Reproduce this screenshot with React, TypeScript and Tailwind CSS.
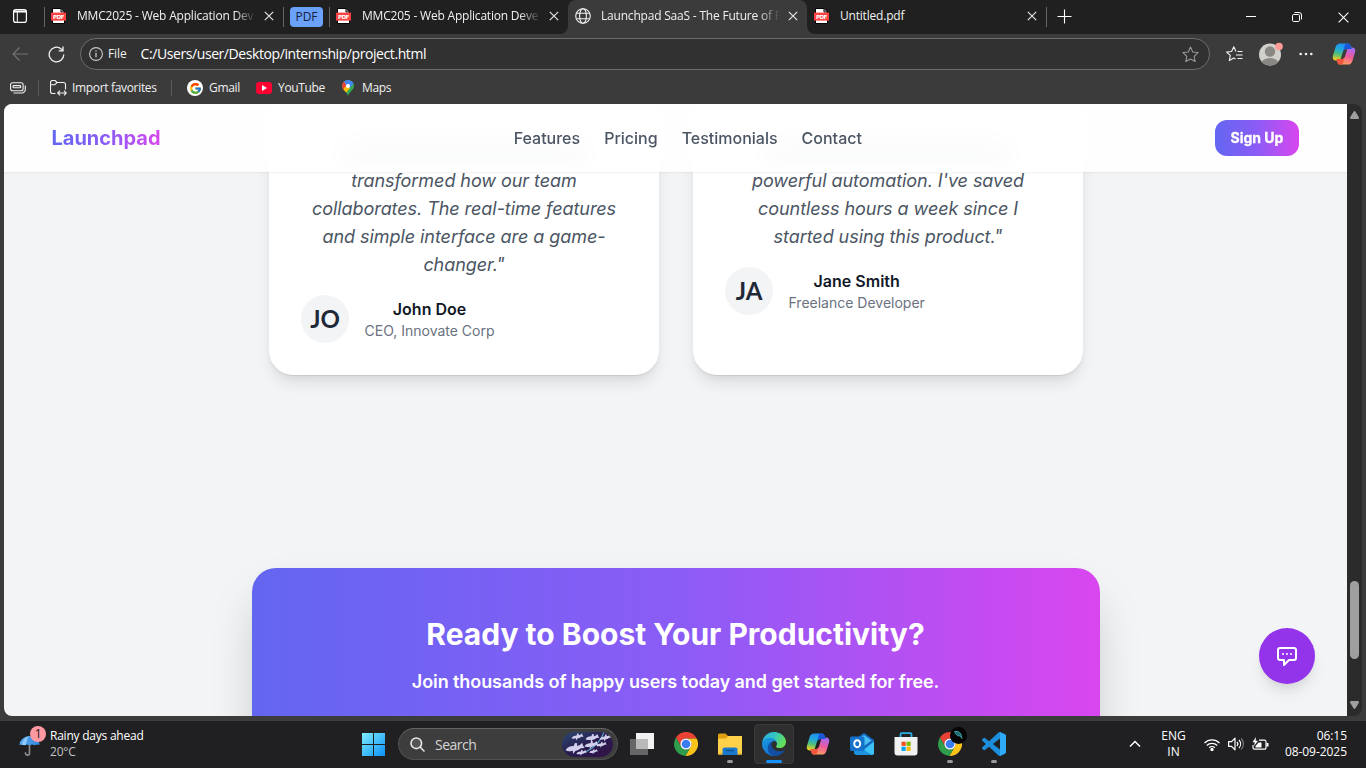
import React from 'react';
import { FcGoogle } from 'react-icons/fc';

function Cross() {
  return (
    <svg width="10" height="10" viewBox="0 0 10 10" className="shrink-0" stroke="#e4e4e4" strokeWidth="1.2">
      <path d="M.8.8l8.4 8.4M9.2.8L.8 9.2" />
    </svg>
  );
}

function PdfIcon() {
  return (
    <svg width="15" height="16" viewBox="0 0 15 16" className="mr-px shrink-0">
      <path d="M1.5.5h8.5l3.5 3.5v11.5h-12z" fill="#fff" stroke="#000" />
      <path d="M10 .5V4h3.5z" fill="#ddd" stroke="#000" />
      <rect y="4.6" width="15" height="8" fill="#fb4141" />
      <text x="7.5" y="10.8" textAnchor="middle" fontSize="5.6" fontWeight="700" fill="#fff" fontFamily="DejaVu Sans, sans-serif" textLength="11">PDF</text>
    </svg>
  );
}

function Globe() {
  return (
    <svg width="16" height="16" viewBox="0 0 16 16" className="shrink-0" fill="none" stroke="#f0f0f0" strokeWidth="1.1">
      <circle cx="8" cy="8" r="7.3" />
      <ellipse cx="8" cy="8" rx="3.4" ry="7.3" />
      <path d="M1.3 5.3h13.4M1.3 10.7h13.4" />
    </svg>
  );
}

function Copilot({ size, id }: { size: number; id: string }) {
  const d = 'M8 1.5h7.6c1.8 0 2.6 1 3.1 2.6L19.6 7H15c-2 0-3.4.8-4 2.6L9 16c-.5 1.6-1.4 2.4-3 2.4H4c-2.6 0-3.8-1.9-3.1-4.5l2.7-8.8C4.3 2.7 5.9 1.5 8 1.5z';
  return (
    <svg width={size} height={size} viewBox="0 0 24 24" className="shrink-0">
      <defs>
        <linearGradient id={id + 'a'} x1=".55" y1="0" x2=".3" y2="1">
          <stop offset="0" stopColor="#1e8ff0" />
          <stop offset=".35" stopColor="#22a8e0" />
          <stop offset=".65" stopColor="#4cbf7c" />
          <stop offset="1" stopColor="#f3cf1d" />
        </linearGradient>
        <linearGradient id={id + 'b'} x1=".3" y1="1" x2=".6" y2="0">
          <stop offset="0" stopColor="#a66bf5" />
          <stop offset=".5" stopColor="#ee5a9c" />
          <stop offset="1" stopColor="#ffa05c" />
        </linearGradient>
      </defs>
      <path d={d} fill={`url(#${id}b)`} transform="rotate(180 12 12)" />
      <path d={d} fill={`url(#${id}a)`} />
      <path d="M13.4 1.5h2.2c1.8 0 2.6 1 3.1 2.6L19.6 7H15c-2 0-3.4.8-4 2.6z" fill="#1a56d6" />
      <path d="M10.6 22.5H8.4c-1.8 0-2.6-1-3.1-2.6L4.4 17H9c2 0 3.4-.8 4-2.6z" fill="#f2563f" />
    </svg>
  );
}

function Chrome() {
  return (
    <svg width="24" height="24" viewBox="2 2 44 44" className="shrink-0">
      <path d="M43.6 14H24a10 10 0 0 0-8.66 15L5.54 12.03A22 22 0 0 1 43.6 14z" fill="#ea4335" />
      <path d="M22.86 45.97L32.66 29A10 10 0 0 0 24 14h19.6A22 22 0 0 1 22.86 45.97z" fill="#fcc419" />
      <path d="M5.54 12.03L15.34 29A10 10 0 0 0 32.66 29L22.86 45.97A22 22 0 0 1 5.54 12.03z" fill="#2f9e4c" />
      <circle cx="24" cy="24" r="10.3" fill="#fff" />
      <circle cx="24" cy="24" r="8" fill="#3b7df0" />
    </svg>
  );
}

function Edge() {
  return (
    <svg width="24" height="24" viewBox="0 0 256 256" className="shrink-0">
      <defs>
        <linearGradient id="ed1" x1="0" y1="0" x2="1" y2=".4">
          <stop offset="0" stopColor="#2ba9e6" />
          <stop offset=".5" stopColor="#33c4c4" />
          <stop offset="1" stopColor="#63e05a" />
        </linearGradient>
        <linearGradient id="ed2" x1="0" y1="0" x2=".4" y2="1">
          <stop offset="0" stopColor="#1b9de2" />
          <stop offset="1" stopColor="#1573cf" />
        </linearGradient>
      </defs>
      <path d="M105.73 241.46a79.2 79.2 0 0 1-22.74-21.34 80.72 80.72 0 0 1 29.53-120c3.12-1.47 8.45-4.13 15.54-4a32.35 32.35 0 0 1 25.69 13 31.88 31.88 0 0 1 6.36 18.66c0-.21 24.46-79.6-80-79.6-43.9 0-80 41.66-80 78.21a130.15 130.15 0 0 0 12.11 56 128 128 0 0 0 156.38 67.11 75.55 75.55 0 0 1-62.78-8z" fill="url(#ed2)" />
      <path d="M235.68 195.46a93.73 93.73 0 0 1-10.54 4.71 101.87 101.87 0 0 1-35.9 6.46c-47.32 0-88.54-32.55-88.54-74.32A31.48 31.48 0 0 1 117.13 105c-42.8 1.8-53.8 46.4-53.8 72.53 0 73.88 68.09 78 82.76 78 7.91 0 19.84-2.3 27-4.56l1.31-.44a128.34 128.34 0 0 0 66.6-49.4 4 4 0 0 0-5.32-5.64z" fill="#124fa3" />
      <path d="M152.33 148.86c-.81 1.05-3.3 2.5-3.3 5.66 0 2.61 1.7 5.12 4.72 7.23 14.38 10 41.49 8.68 41.56 8.68a59.56 59.56 0 0 0 30.27-8.35 61.38 61.38 0 0 0 30.43-52.88c.26-22.41-8-37.31-11.34-43.91C223.46 23.84 177.72 0 128 0A128 128 0 0 0 0 126.2c.48-36.54 36.8-66.05 80-66.05 3.5 0 23.46.34 42 10.07 16.34 8.58 24.9 18.94 30.85 29.21 6.18 10.67 7.28 24.15 7.28 29.52s-2.74 13.33-7.8 19.91z" fill="url(#ed1)" />
    </svg>
  );
}

function Explorer() {
  return (
    <svg width="24" height="22" viewBox="0 0 24 22">
      <path d="M0 2A1.5 1.5 0 0 1 1.5.5h6L10 3v4H0z" fill="#e0a012" />
      <path d="M0 5.5h8L10 3h14v18.5H0z" fill="#ffd04a" />
      <path d="M0 20h24v1.5H0z" fill="#f2b92c" />
      <path d="M4.5 22v-5.500a2 2 0 0 1 2-2h11a2 2 0 0 1 2 2V22z" fill="#1b78cc" />
      <path d="M8 17.5h8" stroke="#0b4f8f" strokeWidth="1.3" />
    </svg>
  );
}

function Outlook() {
  return (
    <svg width="24" height="24" viewBox="0 0 24 24">
      <path d="M4 8L14 .8l10 7.2V22H4z" fill="#1567c0" />
      <path d="M7 7.5L14 3l7.5 5.5L14 14z" fill="#49c0f2" />
      <path d="M24 9.5V21a2 2 0 0 1-2 2H7z" fill="#3cc3f4" />
      <path d="M4 12l18 11H7a3 3 0 0 1-3-3z" fill="#1c92e0" />
      <rect y="4.5" width="14.5" height="14.5" rx="1.5" fill="#1272cc" />
      <ellipse cx="7.2" cy="11.7" rx="3" ry="3.5" fill="none" stroke="#fff" strokeWidth="1.9" />
    </svg>
  );
}

function Store() {
  return (
    <svg width="24" height="24" viewBox="0 0 24 24">
      <path d="M6.5 6V2.400A1.200 1.200 0 0 1 7.700 1.200h8.600a1.200 1.200 0 0 1 1.200 1.200V6" fill="none" stroke="#29b0ea" strokeWidth="1.8" />
      <path d="M.5 5h23v15.500a3 3 0 0 1-3 3h-17a3 3 0 0 1-3-3z" fill="#f1f1f1" />
      <path d="M7.5 9.7h4.200v4.200H7.500z" fill="#f25022" />
      <path d="M12.5 9.7h4.200v4.200h-4.200z" fill="#7fba00" />
      <path d="M7.5 14.7h4.200v4.200H7.500z" fill="#00a4ef" />
      <path d="M12.5 14.7h4.200v4.200h-4.200z" fill="#ffb900" />
    </svg>
  );
}

function VSCode() {
  return (
    <svg width="24" height="24" viewBox="0 0 24 24">
      <path fill="#1c8fdc" d="M23.15 2.587L18.21.21a1.494 1.494 0 0 0-1.705.29l-9.46 8.63-4.12-3.128a.999.999 0 0 0-1.276.057L.327 7.261A1 1 0 0 0 .326 8.74L3.899 12 .326 15.26a1 1 0 0 0 .001 1.479L1.65 17.94a.999.999 0 0 0 1.276.057l4.12-3.128 9.46 8.63a1.492 1.492 0 0 0 1.704.29l4.942-2.377A1.5 1.5 0 0 0 24 20.06V3.939a1.5 1.5 0 0 0-.85-1.352zm-5.146 14.861L10.826 12l7.178-5.448v10.896z" />
      <path fill="#2fabf5" d="M18 .1l5.15 2.487A1.5 1.5 0 0 1 24 3.939V20.06a1.5 1.5 0 0 1-.848 1.352L18 23.9z" />
    </svg>
  );
}

function MapPin() {
  return (
    <svg width="12" height="16" viewBox="0 0 12 16" className="shrink-0">
      <defs>
        <clipPath id="pin">
          <path d="M6 0a6 6 0 0 1 6 6c0 4-4.4 5-6 10C4.8 11 0 10 0 6a6 6 0 0 1 6-6z" />
        </clipPath>
      </defs>
      <g clipPath="url(#pin)">
        <path d="M0 0h12v16H0z" fill="#34a853" />
        <path d="M0 0h12v3L5 11z" fill="#4285f4" />
        <path d="M0 0l3 2 3 4-5 6-3-2z" fill="#ea4335" />
        <path d="M0 10.5L5 5l3 3-5 6z" fill="#fbbc04" />
        <path d="M2 1.5L6 0l6 3-6 5z" fill="#4285f4" />
      </g>
      <circle cx="6" cy="6" r="2.1" fill="#fff" />
    </svg>
  );
}

function Tab({ icon, title, className }: { icon: React.ReactNode; title: string; className: string }) {
  return (
    <div className={'flex h-full items-center pb-[2px] ' + className}>
      {icon}
      <div className="ml-[10px] w-[179px] whitespace-nowrap [mask-image:linear-gradient(to_right,#000_88%,transparent)]">{title}</div>
      <div className="ml-[7.5px] flex"><Cross /></div>
    </div>
  );
}

function TabStrip() {
  return (
    <div className="flex h-[34px] shrink-0 bg-[#3b3b3b] text-[12px] tracking-[-0.2px] text-[#f0f0f0]">
      <div className="flex w-[568px] shrink-0 items-center rounded-br-[8px] bg-[#202020]">
        <svg width="14" height="14" viewBox="0 0 14 14" className="mb-[2px] ml-[13px] shrink-0" fill="none" stroke="#fff" strokeWidth="1.2">
          <rect x=".6" y=".6" width="12.8" height="12.8" rx="2.2" />
          <path d="M1 2.5h12" strokeWidth="2" />
          <path d="M4.3 3v10" strokeWidth="1" />
        </svg>
        <div className="ml-[17px] h-5 w-px shrink-0 bg-[#666]" />
        <Tab className="ml-[6px]" icon={<PdfIcon />} title="MMC2025 - Web Application Dev" />
        <div className="ml-[9.5px] h-5 w-px shrink-0 bg-[#666]" />
        <div className="ml-[6px] flex h-5 w-[33px] shrink-0 items-center justify-center rounded-[4px] bg-[#6aa1fa] tracking-normal text-[#15213a]">PDF</div>
        <div className="ml-[6px] h-5 w-px shrink-0 bg-[#666]" />
        <Tab className="ml-[6px]" icon={<PdfIcon />} title="MMC205 - Web Application Deve" />
      </div>
      <div className="w-[239px] shrink-0 bg-[#202020]">
        <div className="h-full rounded-t-[8px] bg-[#3b3b3b]">
          <Tab className="pl-[7px]" icon={<Globe />} title="Launchpad SaaS - The Future of P" />
        </div>
      </div>
      <div className="flex flex-1 items-center rounded-bl-[8px] bg-[#202020] pl-[7px]">
        <div className="mb-[2px] flex"><PdfIcon /></div>
        <div className="mb-[2px] ml-[10px] w-[187px]">Untitled.pdf</div>
        <div className="mb-[2px] flex"><Cross /></div>
        <div className="ml-[9px] h-5 w-px bg-[#666]" />
        <svg width="15" height="15" viewBox="0 0 15 15" className="mb-[2px] ml-[10px]" stroke="#fff" strokeWidth="1.1">
          <path d="M7.5 .5v14M.5 7.5h14" />
        </svg>
        <svg width="10" height="10" viewBox="0 0 10 10" className="ml-[174px]" stroke="#fff" strokeWidth="1">
          <path d="M0 4.5h10" />
        </svg>
        <svg width="10" height="10" viewBox="0 0 10 10" className="ml-[36px]" fill="none" stroke="#fff" strokeWidth="1">
          <rect x=".5" y="2.5" width="7" height="7" rx="1.2" />
          <path d="M2.5 .5H7A2.5 2.5 0 0 1 9.5 3v4.5" />
        </svg>
        <svg width="11" height="11" viewBox="0 0 11 11" className="ml-[35.5px]" stroke="#fff" strokeWidth="1.1">
          <path d="M.6.6l9.8 9.8M10.4.6L.6 10.4" />
        </svg>
      </div>
    </div>
  );
}

function Toolbar() {
  return (
    <div className="flex h-[40px] shrink-0 items-center">
      <svg width="16" height="14" viewBox="0 0 16 14" className="ml-[12px]" fill="none" stroke="#757575" strokeWidth="1.1">
        <path d="M16 7H1M7.5 .5L1 7l6.5 6.5" />
      </svg>
      <svg width="17" height="17" viewBox="0 0 17 17" className="ml-[20px]" fill="none" stroke="#f2f2f2" strokeWidth="1.3">
        <path d="M15.8 8.5a7.3 7.3 0 1 1-2.6-5.6l1.6 1.6M15 .5v4.3h-4.3" />
      </svg>
      <div className="ml-[15px] flex h-[32px] w-[1130px] items-center rounded-full border border-[#6c6c6c] bg-[#313131] pl-[8px] pr-[10px]">
        <svg width="14" height="14" viewBox="0 0 14 14" fill="none" stroke="#c9c9c9" strokeWidth="1.1">
          <circle cx="7" cy="7" r="6.4" />
          <path d="M7 6v4.3M7 3.5v1.3" strokeWidth="1.3" />
        </svg>
        <div className="ml-[5px] text-[12px] tracking-[-0.1px] text-[#f0f0f0]">File</div>
        <div className="ml-[14px] flex-1 text-[14px] leading-[20px] tracking-[-0.42px] text-white">C:/Users/user/Desktop/internship/project.html</div>
        <svg width="17" height="17" viewBox="0 0 24 24" fill="none" stroke="#9a9a9a" strokeWidth="1.5" strokeLinejoin="round">
          <path d="M12 1.5l3.2 6.9 7.5.9-5.5 5.2 1.4 7.5L12 18.3 5.4 22l1.4-7.5L1.3 9.3l7.5-.9z" />
        </svg>
      </div>
      <svg width="17" height="16" viewBox="0 0 17 16" className="ml-[16px]" fill="none" stroke="#f2f2f2" strokeWidth="1.1" strokeLinejoin="round">
        <path d="M10 5.5L7.8.8 5.6 5.5.6 6l3.7 3.4-1 5.2L7.8 12l1.7 1" />
        <path d="M11.5 5.5h5M10 9h6.5M11.5 12.5h5" />
      </svg>
      <svg width="25" height="25" viewBox="0 0 25 25" className="ml-[15px]">
        <defs><clipPath id="av"><circle cx="12" cy="12.5" r="11" /></clipPath></defs>
        <circle cx="12" cy="12.5" r="11" fill="#d2d0cc" />
        <g clipPath="url(#av)" fill="#8b8883">
          <circle cx="12" cy="9.5" r="5.2" />
          <ellipse cx="12" cy="21.5" rx="8.5" ry="5.5" />
        </g>
        <circle cx="21" cy="4.5" r="3.8" fill="#ff9c98" />
      </svg>
      <svg width="14" height="4" viewBox="0 0 14 4" className="ml-[16px]" fill="#f2f2f2">
        <circle cx="1.7" cy="2" r="1.3" /><circle cx="7" cy="2" r="1.3" /><circle cx="12.3" cy="2" r="1.3" />
      </svg>
      <div className="ml-[19px] flex"><Copilot size={24} id="tb" /></div>
    </div>
  );
}

function Bookmarks() {
  return (
    <div className="flex h-[30px] shrink-0 items-center pb-[2px] text-[12px] tracking-[-0.33px] text-[#f0f0f0]">
      <svg width="16" height="12" viewBox="0 0 16 12" className="ml-[10px]" fill="none" stroke="#f2f2f2" strokeWidth="1.1">
        <rect x=".6" y=".8" width="12.5" height="8" rx="2" />
        <rect x="3" y="3.6" width="7.7" height="2.2" rx=".8" />
        <path d="M15.3 3.5v4a3.5 3.5 0 0 1-3.5 3.5H3.5" />
      </svg>
      <div className="ml-[12px] h-4 w-px bg-[#5c5c5c]" />
      <svg width="17" height="16" viewBox="0 0 17 16" className="ml-[11px]" fill="none" stroke="#f2f2f2" strokeWidth="1.1">
        <path d="M5.5 13.5h-3a2 2 0 0 1-2-2v-9a2 2 0 0 1 2-2H5l2 2h6.5a2 2 0 0 1 2 2v5M.8 4.8h4L7 2.5" />
        <path d="M8 13h8M10 10.7L7.7 13l2.3 2.3M14 10.7l2.300 2.300-2.300 2.300" />
      </svg>
      <div className="ml-[5px] w-[86px] whitespace-nowrap">Import favorites</div>
      <div className="ml-[13px] h-4 w-px bg-[#5c5c5c]" />
      <div className="ml-[15px] flex h-[16px] w-[16px] items-center justify-center rounded-full bg-white"><FcGoogle size={13} /></div>
      <div className="ml-[6px] w-[31px]">Gmail</div>
      <div className="ml-[16px] flex h-[12px] w-[16px] items-center justify-center rounded-[3px] bg-[#f03]">
        <svg width="5" height="6" viewBox="0 0 5 6"><path d="M0 0l5 3-5 3z" fill="#fff" /></svg>
      </div>
      <div className="ml-[6px] w-[47px]">YouTube</div>
      <div className="ml-[17px] flex"><MapPin /></div>
      <div className="ml-[8px]">Maps</div>
    </div>
  );
}

function Testimonial({ quote, initials, name, role }: { quote: string; initials: string; name: string; role: string }) {
  return (
    <div className="h-[268px] w-[390px] rounded-[24px] bg-white p-8 text-center shadow-[0_10px_15px_-3px_rgba(0,0,0,0.1),0_4px_6px_-2px_rgba(0,0,0,0.05),0_1px_0_rgba(0,0,0,0.06)]">
      <div className="flex h-7 items-center justify-center">
        <div className="h-[12px] w-[250px] rounded-full bg-[#9ca3af] blur-[6px]" />
      </div>
      <p className="px-[6px] text-lg italic leading-7 tracking-[-0.06px] text-[#4b5563]">{quote}</p>
      <div className="mt-4 flex items-center">
        <div className="flex h-12 w-12 items-center justify-center rounded-full bg-[#f3f4f6] font-['Lato',sans-serif] text-[24px] font-bold text-[#1f2937]">{initials}</div>
        <div className="ml-[15.5px]">
          <div className="text-base font-semibold text-[#111827]">{name}</div>
          <div className="text-sm text-[#6b7280]">{role}</div>
        </div>
      </div>
    </div>
  );
}

function WebPage() {
  return (
    <div className="relative w-[1343px] shrink-0 overflow-hidden rounded-l-[8px] bg-[#f3f4f6] font-['Inter',sans-serif]">
      <div className="flex gap-[34px] pl-[265px] pt-[3px]">
        <Testimonial quote={'transformed how our team collaborates. The real-time features and simple interface are a game-changer."'} initials="JO" name="John Doe" role="CEO, Innovate Corp" />
        <Testimonial quote={'powerful automation. I\'ve saved countless hours a week since I started using this product."'} initials="JA" name="Jane Smith" role="Freelance Developer" />
      </div>
      <section className="ml-[248px] mt-[193px] h-[320px] w-[848px] rounded-[24px] bg-[linear-gradient(to_right,#6366f1,#8b5cf6_50%,#d946ef)] pt-12 text-center text-white shadow-[0_25px_50px_-12px_rgba(0,0,0,0.25)]">
        <h2 className="-translate-x-[0.5px] text-[30px] font-bold leading-9">Ready to Boost Your Productivity?</h2>
        <p className="mt-4 -translate-x-[0.5px] text-lg font-semibold leading-7 tracking-[-0.08px]">Join thousands of happy users today and get started for free.</p>
      </section>
      <header className="absolute inset-x-0 top-0 flex h-[68px] items-center justify-between bg-white/90 pl-[47.5px] pr-12 shadow-[0_1px_2px_rgba(0,0,0,0.06)] backdrop-blur-[12px]">
        <span className="bg-[linear-gradient(to_right,#6366f1,#8b5cf6_50%,#d946ef)] bg-clip-text text-xl font-bold text-transparent">Launchpad</span>
        <nav className="flex gap-6 font-medium text-[#4b5563]">
          <span>Features</span><span>Pricing</span><span>Testimonials</span><span>Contact</span>
        </nav>
        <button className="h-9 w-[84px] rounded-[12px] bg-[linear-gradient(to_right,#6366f1,#8b5cf6_50%,#d946ef)] text-sm font-bold text-white [-webkit-text-stroke:0.3px_white]">Sign Up</button>
      </header>
      <button className="absolute bottom-8 right-8 flex h-14 w-14 items-center justify-center rounded-full bg-[#9333ea] shadow-[0_10px_15px_-3px_rgba(0,0,0,0.1),0_4px_6px_-2px_rgba(0,0,0,0.05)]">
        <svg width="24" height="24" viewBox="0 0 24 24" fill="none" stroke="#fff" strokeWidth="2" strokeLinecap="round" strokeLinejoin="round">
          <path d="M8 10h.01M12 10h.01M16 10h.01M9 16H5a2 2 0 01-2-2V6a2 2 0 012-2h14a2 2 0 012 2v8a2 2 0 01-2 2h-5l-5 5v-5z" />
        </svg>
      </button>
    </div>
  );
}

function Scrollbar() {
  return (
    <div className="flex w-[15px] flex-col items-center rounded-r-[8px] bg-[#2b2b2b]">
      <svg width="9" height="8" viewBox="0 0 9 8" className="mt-[7px]" fill="#9f9f9f"><path d="M3.5 .8a1.2 1.2 0 0 1 2 0L9 6.5Q9 8 8 8H1Q0 8 0 6.5z" /></svg>
      <div className="mt-[462px] h-[78px] w-[9px] rounded-full bg-[#9f9f9f]" />
      <svg width="9" height="8" viewBox="0 0 9 8" className="mt-[42px]" fill="#9f9f9f"><path d="M3.5 7.2a1.2 1.2 0 0 0 2 0L9 1.5Q9 0 8 0H1Q0 0 0 1.5z" /></svg>
    </div>
  );
}

function AppSlot({ children, state }: { children: React.ReactNode; state?: string }) {
  return (
    <div className="flex h-[48px] w-[44px] shrink-0 items-center justify-center">
      <div className={'relative flex h-10 w-10 items-center justify-center rounded-[4px] ' + (state === 'active' ? 'border border-[#393939] bg-[#2f2f30]' : '')}>
        {children}
        {state === 'open' && <div className="absolute bottom-[1px] left-[17px] h-[3px] w-[6px] rounded-full bg-[#9a9a9a]" />}
        {state === 'active' && <div className="absolute bottom-0 left-[11px] h-[3px] w-[16px] rounded-full bg-[#1490ff]" />}
      </div>
    </div>
  );
}

function Fish({ x, y, s }: { x: number; y: number; s: number }) {
  return <path transform={`translate(${x} ${y}) rotate(-10) scale(${s})`} d="M0 3Q3-.5 8 .6l1.5-2.6 2 .5-.5 2.5Q14 1.2 16-1l.5 3L17.5 4l-3.5-.3Q11 5.5 9 5L6 7.5l.5-3Q2 5 0 3z" fill="#d2cfec" />;
}

function Taskbar() {
  return (
    <div className="flex h-[48px] shrink-0 items-center bg-[#202022] text-[12px] tracking-[-0.3px] text-white shadow-[inset_0_1px_0_#3c3d3f]">
      <div className="flex w-[351px] items-center">
        <svg width="28" height="30" viewBox="0 0 28 30" className="mb-[7px] ml-[19px] shrink-0">
          <defs><linearGradient id="um" x1="0" y1="0" x2="1" y2="0"><stop offset="0" stopColor="#5aa9ee" /><stop offset="1" stopColor="#3289e0" /></linearGradient></defs>
          <path d="M10.5 18v9a2 2 0 0 1-4 .3v-1" fill="none" stroke="#8a8a8a" strokeWidth="1.7" />
          <path d="M.5 19a10 9 0 0 1 20 0l-2.3-.5-2.4.7-2.7-.7-2.6.7-2.7-.7-2.6.7-2.4-.7z" fill="url(#um)" />
          <path d="M7 19q.5-7 3.5-9-6 1-8 9z" fill="#8ecbfa" />
          <circle cx="19" cy="8" r="8" fill="#ff9aa2" />
          <text x="19" y="12.2" textAnchor="middle" fontSize="12" fill="#2a1214">1</text>
        </svg>
        <div className="ml-[3px] leading-[16px] tracking-[-0.23px]">
          <div>Rainy days ahead</div>
          <div className="text-[#c2c2c2]">20°C</div>
        </div>
      </div>
      <div className="flex w-[44px] items-center justify-center">
        <svg width="24" height="24" viewBox="0 0 24 24">
          <defs><linearGradient id="win" x1="0" y1="0" x2="1" y2="1"><stop offset="0" stopColor="#7fedff" /><stop offset="1" stopColor="#0a90f5" /></linearGradient></defs>
          <path d="M1 1h11v11H1zM13 1h11v11H13zM1 13h11v11H1zM13 13h11v11H13z" fill="url(#win)" />
        </svg>
      </div>
      <div className="ml-[3px] flex h-[32px] w-[220px] items-center rounded-full border border-[#505050] border-t-[#646464] bg-[#3d3d3e] pl-[11px] pr-[4px]">
        <svg width="15" height="15" viewBox="0 0 15 15" fill="none" stroke="#e6e6e6" strokeWidth="1.6" strokeLinecap="round">
          <circle cx="6.3" cy="6.3" r="5.3" fill="#555" />
          <path d="M10.3 10.3l3.7 3.7" />
        </svg>
        <div className="ml-[10px] flex-1 text-[14px] tracking-[-0.5px] text-[#d5d5d5]">Search</div>
        <svg width="51" height="25" viewBox="0 0 51 25">
          <defs>
            <clipPath id="pill"><rect width="51" height="25" rx="12.5" /></clipPath>
            <linearGradient id="sea" x1="0" y1="0" x2="1" y2="1"><stop offset="0" stopColor="#2b4a72" /><stop offset=".5" stopColor="#271b4e" /><stop offset="1" stopColor="#341246" /></linearGradient>
          </defs>
          <g clipPath="url(#pill)">
            <path d="M0 0h51v25H0z" fill="url(#sea)" />
            <path d="M42 0q-4 13-20 21" fill="none" stroke="#5a9bc0" strokeWidth="1.3" />
            <Fish x={9} y={4} s={0.7} /><Fish x={23} y={5} s={0.8} /><Fish x={37} y={5} s={0.7} />
            <Fish x={3} y={15} s={1.1} /><Fish x={22} y={12} s={0.8} /><Fish x={34} y={12} s={0.6} />
            <Fish x={14} y={20} s={0.6} /><Fish x={27} y={19} s={0.5} />
          </g>
        </svg>
      </div>
      <div className="ml-[2px] flex">
        <AppSlot>
          <svg width="24" height="22" viewBox="0 0 24 22">
            <path d="M6 0h18v16H6z" fill="#f2f2f2" />
            <path d="M0 6h18v16H0z" fill="#666" />
            <path d="M6 6h12v10H6z" fill="#b9b9b9" />
          </svg>
        </AppSlot>
        <AppSlot><Chrome /></AppSlot>
        <AppSlot state="open"><Explorer /></AppSlot>
        <AppSlot state="active"><Edge /></AppSlot>
        <AppSlot><Copilot size={24} id="tk" /></AppSlot>
        <AppSlot><Outlook /></AppSlot>
        <AppSlot><Store /></AppSlot>
        <AppSlot state="open">
          <Chrome />
          <svg width="17" height="17" viewBox="0 0 17 17" className="absolute right-[3px] top-[3px]">
            <circle cx="8.5" cy="8.5" r="8.5" fill="#050505" />
            <path d="M4.5 4.5q4-1.500 6.500 2.500l1 4.500-2-2.500q-4 0-5.500-4.500z" fill="#1f6a72" stroke="#43b8b8" strokeWidth=".7" />
          </svg>
        </AppSlot>
        <AppSlot state="open"><VSCode /></AppSlot>
      </div>
      <div className="flex flex-1 items-center justify-end pr-[19px]">
        <svg width="12" height="8" viewBox="0 0 12 8" fill="none" stroke="#fff" strokeWidth="1.5"><path d="M1 6.5l5-5 5 5" /></svg>
        <div className="ml-[20px] w-[25px] text-center leading-[16px] tracking-normal"><div>ENG</div><div>IN</div></div>
        <svg width="16" height="13" viewBox="0 0 16 13" className="ml-[18px]" fill="none" stroke="#fff" strokeWidth="1.3">
          <path d="M.5 5a10.5 10.5 0 0 1 15 0M2.8 7.5a7.3 7.3 0 0 1 10.4 0M5.2 9.7a4 4 0 0 1 5.6 0" />
          <circle cx="8" cy="11.5" r="1" fill="#fff" />
        </svg>
        <svg width="17" height="14" viewBox="0 0 17 14" className="ml-[8px]" fill="none" stroke="#fff" strokeWidth="1.2" strokeLinejoin="round">
          <path d="M.6 4.7h3L7 1.2v11.6L3.6 9.3h-3zM9 5a3 3 0 0 1 0 4M11 3a6 6 0 0 1 0 8" />
          <path d="M13.2 1.5a8 8 0 0 1 0 11" stroke="#777" />
        </svg>
        <svg width="17" height="14" viewBox="0 0 17 14" className="ml-[7px]" fill="none" stroke="#fff" strokeWidth="1.2">
          <path d="M7 3.2h5.5A1.5 1.5 0 0 1 14 4.7v6a1.5 1.5 0 0 1-1.5 1.5h-10A1.5 1.5 0 0 1 1 10.700V8" />
          <path d="M6.5 5.5h3v5h-6V9z" fill="#fff" stroke="none" />
          <path d="M14.5 6h2v3.5h-2z" fill="#fff" stroke="none" />
          <path d="M4 0L.5 5.2h2.300L2 9l4-5.300H3.600z" fill="#fff" stroke="none" />
        </svg>
        <div className="ml-[15px] w-[63px] whitespace-nowrap text-right leading-[16px] tracking-[-0.05px]"><div>06:15</div><div>08-09-2025</div></div>
      </div>
    </div>
  );
}

export default function App() {
  return (
    <div className="flex h-[768px] w-[1366px] flex-col overflow-hidden bg-[#3b3b3b] font-['Open_Sans','Noto_Sans',sans-serif]">
      <TabStrip />
      <Toolbar />
      <Bookmarks />
      <div className="mb-[4px] flex h-[612px] shrink-0 pl-[4px]">
        <WebPage />
        <Scrollbar />
      </div>
      <Taskbar />
    </div>
  );
}
